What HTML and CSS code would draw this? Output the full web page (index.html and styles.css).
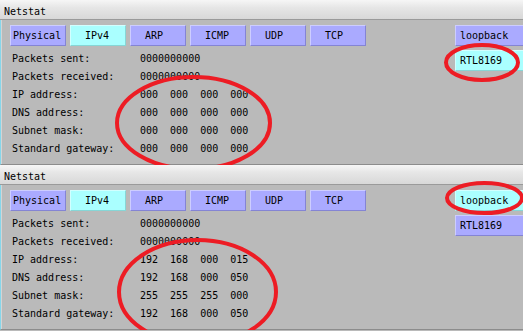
FILE: index.html
```html
<!DOCTYPE html>
<html>
<head>
<meta charset="utf-8">
<link rel="stylesheet" href="styles.css">
</head>
<body>
<div class="desk">
  <section class="win">
    <div class="title">Netstat</div>
    <div class="body">
      <div class="main">
        <div class="tabs">
          <div class="tab wide">Physical</div>
          <div class="tab on">IPv4</div>
          <div class="tab">ARP</div>
          <div class="tab">ICMP</div>
          <div class="tab">UDP</div>
          <div class="tab">TCP</div>
        </div>
        <div class="rows">
          <span class="lbl">Packets sent:</span><span class="val">0000000000</span>
          <span class="lbl">Packets received:</span><span class="val">0000000000</span>
          <span class="lbl">IP address:</span><span class="val ip"><span>000</span><span>000</span><span>000</span><span>000</span></span>
          <span class="lbl">DNS address:</span><span class="val ip"><span>000</span><span>000</span><span>000</span><span>000</span></span>
          <span class="lbl">Subnet mask:</span><span class="val ip"><span>000</span><span>000</span><span>000</span><span>000</span></span>
          <span class="lbl">Standard gateway:</span><span class="val ip"><span>000</span><span>000</span><span>000</span><span>000</span></span>
        </div>
      </div>
      <div class="side">
        <div class="btn">loopback</div>
        <div class="btn on">RTL8169</div>
      </div>
    </div>
    <svg class="marks" width="523" height="165" viewBox="0 0 523 165">
      <ellipse cx="193.5" cy="123" rx="76.5" ry="46"/>
      <ellipse cx="482" cy="62.5" rx="36" ry="17.5"/>
    </svg>
  </section>
  <section class="win">
    <div class="title">Netstat</div>
    <div class="body">
      <div class="main">
        <div class="tabs">
          <div class="tab wide">Physical</div>
          <div class="tab on">IPv4</div>
          <div class="tab">ARP</div>
          <div class="tab">ICMP</div>
          <div class="tab">UDP</div>
          <div class="tab">TCP</div>
        </div>
        <div class="rows">
          <span class="lbl">Packets sent:</span><span class="val">0000000000</span>
          <span class="lbl">Packets received:</span><span class="val">0000000000</span>
          <span class="lbl">IP address:</span><span class="val ip"><span>192</span><span>168</span><span>000</span><span>015</span></span>
          <span class="lbl">DNS address:</span><span class="val ip"><span>192</span><span>168</span><span>000</span><span>050</span></span>
          <span class="lbl">Subnet mask:</span><span class="val ip"><span>255</span><span>255</span><span>255</span><span>000</span></span>
          <span class="lbl">Standard gateway:</span><span class="val ip"><span>192</span><span>168</span><span>000</span><span>050</span></span>
        </div>
      </div>
      <div class="side">
        <div class="btn on">loopback</div>
        <div class="btn">RTL8169</div>
      </div>
    </div>
    <svg class="marks" width="523" height="170" viewBox="0 0 523 170">
      <ellipse cx="197.5" cy="127" rx="78.5" ry="52"/>
      <ellipse cx="484.5" cy="33" rx="37.5" ry="15"/>
    </svg>
  </section>
</div>
</body>
</html>
```
FILE: styles.css
```css
html, body {
  margin: 0;
  padding: 0;
  overflow: hidden;
  background: #bababa;
}
body {
  width: 523px;
  height: 331px;
  font-family: "DejaVu Sans Mono", "Liberation Mono", monospace;
  font-size: 10px;
  color: #000;
}
.desk {
  display: flex;
  flex-direction: column;
}
.win {
  position: relative;
  height: 165px;
  flex: none;
  overflow: hidden;
}
.title {
  height: 16px;
  padding: 3px 0 0 4px;
  line-height: 17px;
  background: linear-gradient(#f6f6f6, #e6e6e6 40%, #d8d8d8);
  border-bottom: 1px solid #9a9a9a;
}
.body {
  height: 139px;
  padding: 5px 0 0 9px;
  background: #bababa;
  border-left: 1px solid #86d6ea;
  border-bottom: 1px solid #8c8c8c;
  box-shadow: inset 1px 0 #d4d4d4;
  display: grid;
  grid-template-columns: 445px 120px;
}
.tabs {
  display: flex;
  gap: 4px;
}
.tab, .btn {
  box-sizing: border-box;
  height: 21px;
  line-height: 19px;
  background: #aaaaff;
  border: 1px solid;
  border-color: #cdcdff #8484d4 #8484d4 #cdcdff;
}
.tab {
  width: 56px;
  padding-left: 14px;
}
.tab.wide {
  padding-left: 2px;
}
.btn {
  padding-left: 4px;
}
.tab.on, .btn.on {
  background: #aaffff;
  border-color: #d2ffff #86d6d6 #86d6d6 #d2ffff;
}
.rows {
  margin-top: 4px;
  padding-left: 2px;
  display: grid;
  grid-template-columns: 128px auto;
  line-height: 18px;
}
.ip {
  display: flex;
  gap: 12px;
}
.side {
  display: flex;
  flex-direction: column;
  gap: 4px;
}
.marks {
  position: absolute;
  left: 0;
  top: 0;
  pointer-events: none;
}
.marks ellipse {
  fill: none;
  stroke: #ed1c24;
  stroke-width: 4;
}
```
